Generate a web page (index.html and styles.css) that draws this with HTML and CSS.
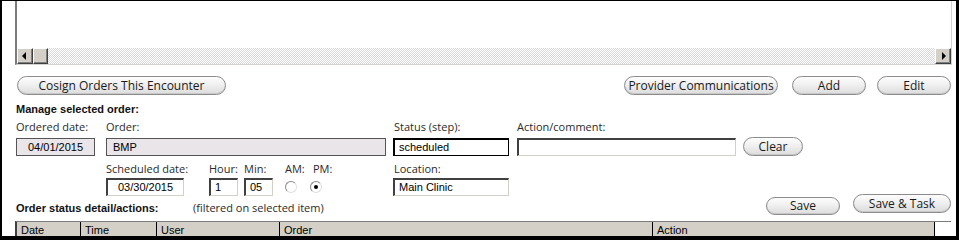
FILE: index.html
```html
<!DOCTYPE html>
<html>
<head>
<meta charset="utf-8">
<link rel="stylesheet" href="styles.css">
</head>
<body>
<div class="frame">
  <div class="listbox">
    <div class="list-body"></div>
    <div class="hscroll">
      <div class="sb-btn"><span class="tri tri-l"></span></div>
      <div class="sb-thumb"></div>
      <div class="sb-track"></div>
      <div class="sb-btn"><span class="tri tri-r"></span></div>
    </div>
  </div>

  <div class="toolbar">
    <button class="pill cosign">Cosign Orders This Encounter</button>
    <div class="spacer"></div>
    <button class="pill provider">Provider Communications</button>
    <button class="pill add">Add</button>
    <button class="pill edit">Edit</button>
  </div>

  <div class="section-title">Manage selected order:</div>

  <div class="row labels r-a">
    <span class="lbl w-ordered">Ordered date:</span>
    <span class="lbl w-order">Order:</span>
    <span class="lbl w-status">Status (step):</span>
    <span class="lbl">Action/comment:</span>
  </div>

  <div class="row fields r-b">
    <div class="field ro f-ordered">04/01/2015</div>
    <div class="field ro f-order">BMP</div>
    <div class="field solid f-status">scheduled</div>
    <div class="field sunken f-action"></div>
    <button class="pill clear">Clear</button>
  </div>

  <div class="row labels r-c">
    <span class="lbl w-sched">Scheduled date:</span>
    <span class="lbl w-hour">Hour:</span>
    <span class="lbl w-min">Min:</span>
    <span class="lbl w-am">AM:</span>
    <span class="lbl w-pm">PM:</span>
    <span class="lbl">Location:</span>
  </div>

  <div class="row fields r-d">
    <div class="field sunken f-sched">03/30/2015</div>
    <div class="field sunken f-hour">1</div>
    <div class="field sunken f-min">05</div>
    <span class="radio r-am"></span>
    <span class="radio r-pm checked"></span>
    <div class="field sunken f-loc">Main Clinic</div>
  </div>

  <div class="row r-e">
    <span class="bold-lbl w-detail">Order status detail/actions:</span>
    <span class="lbl-small">(filtered on selected item)</span>
    <div class="spacer"></div>
    <button class="pill save">Save</button>
    <button class="pill savetask">Save &amp; Task</button>
  </div>

  <div class="grid-head">
    <div class="th">Date</div>
    <div class="th">Time</div>
    <div class="th">User</div>
    <div class="th">Order</div>
    <div class="th">Action</div>
    <div class="th blank"></div>
  </div>
</div>
</body>
</html>
```

FILE: styles.css
```css
* { box-sizing: border-box; }

html, body {
  margin: 0;
  padding: 0;
  background: #000;
}

.frame {
  width: 959px;
  height: 238px;
  background: #fff;
  border-top: 1px solid #000;
  border-left: 2px solid #000;
  border-right: 3px solid #000;
  border-bottom: 2px solid #000;
  padding: 0 4px 0 13px;
  overflow: hidden;
  font-family: "Liberation Sans", Arial, sans-serif;
  color: #000;
}

/* ---------- list box with horizontal scrollbar ---------- */
.listbox {
  height: 64px;
  display: flex;
  flex-direction: column;
  border-left: 2px solid #7c7c7c;
  border-right: 1px solid #d6d3ce;
  border-bottom: 1px solid #d6d3ce;
  background: #fff;
}

.list-body { flex: 1; }

.hscroll {
  height: 16px;
  display: flex;
}

.sb-btn,
.sb-thumb {
  width: 16px;
  height: 16px;
  background: #d4d0c8;
  border-top: 1px solid #fff;
  border-left: 1px solid #fff;
  border-right: 1px solid #404040;
  border-bottom: 1px solid #404040;
  box-shadow: inset -1px -1px 0 #808080;
  display: flex;
  align-items: center;
  justify-content: center;
}

.sb-thumb { width: 15px; }

.sb-track {
  flex: 1;
  background-color: #fff;
  background-image: repeating-conic-gradient(#d8d8d8 0 25%, #fff 0 50%);
  background-size: 2px 2px;
}

.tri {
  width: 0;
  height: 0;
  border-top: 4px solid transparent;
  border-bottom: 4px solid transparent;
}
.tri-l { border-right: 4px solid #000; margin-right: 2px; }
.tri-r { border-left: 4px solid #000; margin-left: 2px; }

/* ---------- pill buttons ---------- */
.pill {
  height: 19px;
  padding: 0;
  margin: 0;
  border: 1px solid #8c8c8c;
  border-radius: 10px;
  background: linear-gradient(#fdfdfd 0%, #f0f0f0 45%, #dcdcdc 100%);
  font-family: "Open Sans", "Liberation Sans", sans-serif;
  font-size: 12px;
  line-height: 17px;
  color: #1a1a1a;
  text-align: center;
  box-shadow: inset 0 -1px 0 #c8c8c8;
}

.toolbar {
  display: flex;
  margin-top: 11px;
  margin-right: 1px;
}

.spacer { flex: 1; }

.cosign { width: 209px; margin-left: 2px; }
.provider { width: 154px; }
.add { width: 74px; margin-left: 14px; }
.edit { width: 74px; margin-left: 11px; }

/* ---------- section labels ---------- */
.section-title,
.bold-lbl {
  font-weight: bold;
  font-size: 11px;
  line-height: 14px;
  color: #111;
}

.section-title {
  margin-top: 7px;
  padding-left: 1px;
}

.row { display: flex; }

.labels {
  font-family: "Open Sans", "Liberation Sans", sans-serif;
  font-size: 11px;
  line-height: 14px;
  color: #2a2a2a;
}

.lbl { white-space: nowrap; }

.r-a { margin-top: 4px; padding-left: 1px; }
.w-ordered { width: 90px; }
.w-order { width: 288px; }
.w-status { width: 123px; }

.r-b {
  margin-top: 3px;
  height: 19px;
  align-items: center;
}

.field {
  height: 18px;
  font-size: 11px;
  line-height: 16px;
  padding: 0 4px;
  white-space: nowrap;
  overflow: hidden;
  color: #000;
}

.ro {
  background: #e9e5e9;
  border: 1px solid #555;
}

.solid {
  background: #fff;
  border: 1px solid #000;
  border-top-width: 2px;
  border-left-width: 2px;
  line-height: 15px;
}

.sunken {
  background: #fff;
  border-top: 2px solid #404040;
  border-left: 2px solid #404040;
  border-right: 1px solid #d4d0c8;
  border-bottom: 1px solid #d4d0c8;
  line-height: 15px;
}

.f-ordered { width: 79px; margin-left: 1px; margin-right: 11px; text-align: center; }
.f-order { width: 280px; margin-right: 7px; padding-left: 6px; }
.f-status { width: 116px; margin-right: 8px; }
.f-action { width: 219px; margin-right: 7px; }
.clear { width: 60px; }

.r-c { margin-top: 6px; padding-left: 91px; }
.w-sched { width: 103px; }
.w-hour { width: 35px; }
.w-min { width: 41px; }
.w-am { width: 28px; }
.w-pm { width: 81px; }

.r-d {
  margin-top: 2px;
  padding-left: 91px;
  align-items: center;
}

.f-sched { width: 78px; margin-right: 25px; text-align: center; }
.f-hour { width: 29px; margin-right: 6px; }
.f-min { width: 29px; }
.f-loc { width: 116px; margin-left: 71px; }

.radio {
  width: 12px;
  height: 12px;
  border-radius: 50%;
  border: 1px solid #8a8a8a;
  border-right-color: #e0e0e0;
  border-bottom-color: #e0e0e0;
  background: #fff;
  display: flex;
  align-items: center;
  justify-content: center;
}
.r-am { margin-left: 12px; }
.r-pm { margin-left: 13px; }
.radio.checked::after {
  content: "";
  width: 4px;
  height: 4px;
  border-radius: 50%;
  background: #000;
}

.r-e {
  height: 19px;
  margin-right: 1px;
}

.w-detail {
  width: 178px;
  padding-left: 1px;
  align-self: flex-end;
}

.lbl-small {
  font-family: "Open Sans", "Liberation Sans", sans-serif;
  font-size: 11px;
  line-height: 14px;
  color: #2a2a2a;
  align-self: flex-end;
  white-space: nowrap;
}

.save { width: 74px; align-self: flex-end; margin-right: 13px; height: 18px; line-height: 16px; }
.savetask { width: 98px; margin-top: -2px; }

/* ---------- grid header ---------- */
.grid-head {
  margin-top: 6px;
  margin-right: 1px;
  display: grid;
  grid-template-columns: 64px 76px 123px 373px 282px 1fr;
  height: 18px;
  border-top: 1px solid #7c7c7c;
  border-left: 2px solid #404040;
}

.th {
  background: #d4d0c8;
  border-right: 1px solid #000;
  font-size: 11px;
  line-height: 16px;
  padding-left: 4px;
  color: #000;
}

.th.blank {
  background: #fff;
  border-right: none;
}
```
